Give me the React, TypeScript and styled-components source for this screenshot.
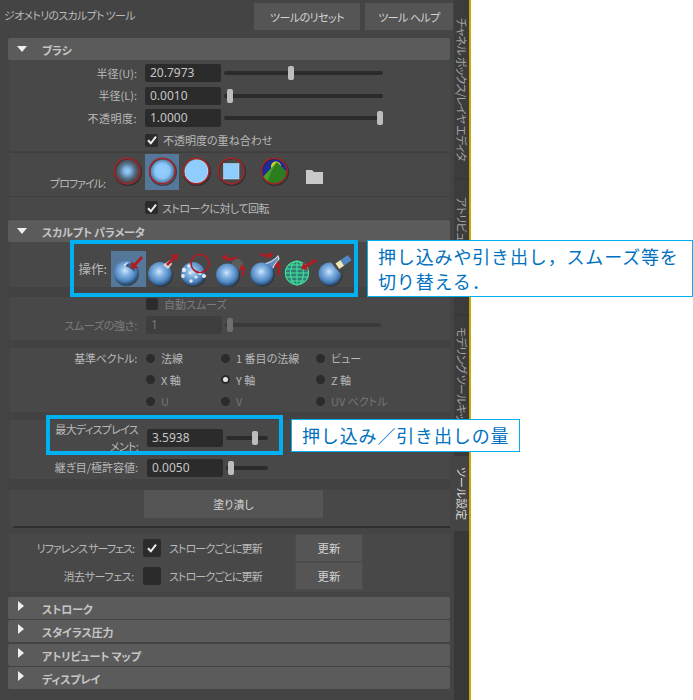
import React from "react";
import styled, { createGlobalStyle } from "styled-components";

const Global = createGlobalStyle`
  html, body { margin: 0; padding: 0; background: #fff; }
  body { width: 693px; height: 700px; overflow: hidden; }
`;

const jp = `"Noto Sans CJK JP", "Noto Sans", sans-serif`;

const Page = styled.div`
  position: relative;
  width: 693px;
  height: 700px;
  background: #fff;
  font-family: ${jp};
  font-size: 11px;
  color: #b9b9b9;
  font-feature-settings: "palt";
  overflow: hidden;
`;
const Window = styled.div`
  display: flex;
  width: 471px;
  height: 700px;
  box-sizing: border-box;
  background: #444;
  border-right: 2px solid #c9a80c;
`;
const Main = styled.div`
  width: 454px;
  flex: none;
  display: flex;
  flex-direction: column;
`;
const TabColumn = styled.div`
  width: 15px;
  flex: none;
  display: flex;
  flex-direction: column;
  background: #383838;
`;
const Tab = styled.div<{ $h: number; $active?: boolean; $pad: number }>`
  height: ${(p) => p.$h}px;
  box-sizing: border-box;
  padding-top: ${(p) => p.$pad}px;
  margin-bottom: 2px;
  background: ${(p) => (p.$active ? "#444" : "#3c3c3c")};
  color: ${(p) => (p.$active ? "#dcdcdc" : "#a4a4a4")};
  writing-mode: vertical-rl;
  text-orientation: sideways;
  line-height: 15px;
  font-size: 11px;
  letter-spacing: ${(p) => (p.$active ? "0" : "-0.7px")};
  white-space: nowrap;
  overflow: hidden;
`;
const Header = styled.div`
  height: 38px;
  box-sizing: border-box;
  padding: 3px 1px 0 4px;
  display: flex;
  gap: 5px;
`;
const Title = styled.div`
  flex: 1;
  line-height: 25px;
  font-size: 11px;
  letter-spacing: -0.7px;
`;
const PushButton = styled.div<{ $w: number; $h: number; $tight?: boolean }>`
  width: ${(p) => p.$w}px;
  height: ${(p) => p.$h}px;
  flex: none;
  box-sizing: border-box;
  background: #555;
  color: #d4d4d4;
  display: flex;
  align-items: center;
  justify-content: center;
  font-size: 11px;
  letter-spacing: ${(p) => (p.$tight ? "-0.55px" : "0")};
`;
const RefButton = styled(PushButton)`
  border: 1px solid #4c4c4c;
  font-size: 11.5px;
`;
const SectionHead = styled.div`
  width: 442px;
  height: 22px;
  padding-top: 2px;
  margin-left: 8px;
  box-sizing: border-box;
  flex: none;
  background: #5b5b5b;
  border-radius: 2px;
  display: flex;
  align-items: center;
  color: #c6c6c6;
  font-weight: 700;
  font-size: 11px;
  letter-spacing: -0.15px;
`;
const Arrow = styled.span<{ $open?: boolean }>`
  width: 34px;
  padding-left: 8px;
  box-sizing: border-box;
  flex: none;
  display: flex;
  &::before {
    content: "";
    ${(p) =>
      p.$open
        ? "border-left:5px solid transparent;border-right:5px solid transparent;border-top:6px solid #eee;margin:-2px 0 0 1px;"
        : "border-top:5px solid transparent;border-bottom:5px solid transparent;border-left:6px solid #eee;margin:-6px 0 0 2px;"}
  }
`;
const Body = styled.div<{ $pt: number }>`
  padding-top: ${(p) => p.$pt}px;
  width: 440px;
  margin-left: 10px;
  margin-right: 4px;
  background: #484848;
`;
const Row = styled.div<{ $h: number; $dim?: boolean }>`
  height: ${(p) => p.$h}px;
  margin-left: -10px;
  display: flex;
  align-items: center;
  color: ${(p) => (p.$dim ? "#7c7c7c" : "inherit")};
`;
const Label = styled.div<{ $w: number; $mr: number; $sp?: number }>`
  width: ${(p) => p.$w}px;
  margin-right: ${(p) => p.$mr}px;
  flex: none;
  text-align: right;
  line-height: 17px;
  letter-spacing: ${(p) => p.$sp ?? 0}px;
`;
const Field = styled.div<{ $dim?: boolean }>`
  width: 76px;
  height: 18px;
  flex: none;
  box-sizing: border-box;
  padding-left: 5px;
  background: ${(p) => (p.$dim ? "#3e3e3e" : "#2b2b2b")};
  color: ${(p) => (p.$dim ? "#777" : "#c6c6c6")};
  border-radius: 2px;
  font-family: "Noto Sans", sans-serif;
  font-size: 12px;
  line-height: 18px;
`;
const Track = styled.div<{ $w: number; $ml: number; $dim?: boolean }>`
  position: relative;
  width: ${(p) => p.$w}px;
  margin-left: ${(p) => p.$ml}px;
  height: 4px;
  flex: none;
  border-radius: 2px;
  background: ${(p) => (p.$dim ? "#3a3a3a" : "#2b2b2b")};
`;
const Thumb = styled.div<{ $x: number; $dim?: boolean }>`
  position: absolute;
  left: ${(p) => p.$x}px;
  top: -5px;
  width: 6px;
  height: 14px;
  border-radius: 2px;
  background: ${(p) => (p.$dim ? "#6e6e6e" : "#bdbdbd")};
`;
const CheckBox = styled.div<{ $size: number }>`
  width: ${(p) => p.$size}px;
  height: ${(p) => p.$size}px;
  flex: none;
  background: #2b2b2b;
  border-radius: 2px;
  display: flex;
  align-items: center;
  justify-content: center;
  color: #eee;
`;
const CheckText = styled.span<{ $ml: number; $sp?: number; $w?: number }>`
  margin-left: ${(p) => p.$ml}px;
  letter-spacing: ${(p) => p.$sp ?? 0}px;
  ${(p) => (p.$w ? `width: ${p.$w}px; flex: none;` : "")}
`;
const Rule = styled.div`
  height: 1px;
  background: #3e3e3e;
`;
const Gutter = styled.div<{ $h: number }>`
  height: ${(p) => p.$h}px;
  background: #424242;
  margin-left: -2px;
`;
const ProfileRow = styled.div`
  height: 43px;
  margin-left: -10px;
  padding-top: 1px;
  box-sizing: border-box;
  display: flex;
  align-items: flex-start;
`;
const ProfileLabel = styled.div`
  width: 105px;
  margin-right: 5px;
  padding-top: 21px;
  text-align: right;
  flex: none;
  letter-spacing: -1px;
`;
const IconCell = styled.div<{ $sel?: boolean; $ml?: number }>`
  width: 34.5px;
  height: 36px;
  flex: none;
  margin-left: ${(p) => p.$ml ?? 0}px;
  background: ${(p) => (p.$sel ? "#55789a" : "transparent")};
  svg { display: block; }
`;
const FolderCell = styled.div`
  margin: 15px 0 0 14px;
  svg { display: block; }
`;
const OpRow = styled.div`
  height: 36px;
  margin: 9px 0 0 -10px;
  display: flex;
  align-items: center;
`;
const OpLabel = styled.div`
  width: 107px;
  margin-right: 4px;
  text-align: right;
  flex: none;
  font-size: 12.5px;
`;
const RadioRow = styled.div`
  height: 21.5px;
  margin-left: -10px;
  display: flex;
  align-items: center;
`;
const VecLabel = styled.div`
  width: 137px;
  text-align: right;
  flex: none;
  letter-spacing: -0.3px;
`;
const RadioItem = styled.div<{ $w: number; $ml?: number; $dim?: boolean }>`
  width: ${(p) => p.$w}px;
  margin-left: ${(p) => p.$ml ?? 0}px;
  flex: none;
  display: flex;
  align-items: center;
  gap: 6px;
  color: ${(p) => (p.$dim ? "#767676" : "inherit")};
  white-space: nowrap;
`;
const Radio = styled.span<{ $on?: boolean }>`
  width: 9px;
  height: 9px;
  flex: none;
  box-sizing: border-box;
  border-radius: 50%;
  background: ${(p) => (p.$on ? "#e4e4e4" : "#2b2b2b")};
  border: ${(p) => (p.$on ? "2px solid #2b2b2b" : "none")};
`;
const FillRow = styled.div`
  height: 36px;
  margin-left: -10px;
  padding-left: 144px;
  box-sizing: border-box;
`;
const HeavyRule = styled.div`
  width: 437px;
  height: 2px;
  margin: 0 0 6px 13px;
  background: #2f2f2f;
`;
const RefBlock = styled.div`
  width: 440px;
  margin: 0 0 5px 10px;
  height: 58px;
  background: #484848;
`;
const RefRow = styled.div`
  height: 28px;
  margin-left: -10px;
  display: flex;
  align-items: center;
`;
const Stack = styled.div`
  display: flex;
  flex-direction: column;
  gap: 1.4px;
`;
const CalloutFrame = styled.div<{ $x: number; $y: number; $w: number; $h: number }>`
  position: absolute;
  left: ${(p) => p.$x}px;
  top: ${(p) => p.$y}px;
  width: ${(p) => p.$w}px;
  height: ${(p) => p.$h}px;
  box-sizing: border-box;
  border: 4px solid #00b0f0;
`;
const Note = styled.div<{ $x: number; $y: number; $w: number; $h: number; $pt: number }>`
  position: absolute;
  left: ${(p) => p.$x}px;
  top: ${(p) => p.$y}px;
  width: ${(p) => p.$w}px;
  height: ${(p) => p.$h}px;
  box-sizing: border-box;
  background: #fff;
  border: 1px solid #00b0f0;
  color: #0070c0;
  font-size: 18px;
  line-height: 25px;
  letter-spacing: 0.85px;
  font-feature-settings: normal;
  padding: ${(p) => p.$pt}px 0 0 10px;
  white-space: pre;
`;

const Check = () => (
  <svg width="10" height="10" viewBox="0 0 10 10">
    <path d="M1 5.3 L3.8 8.3 L9 1.6" fill="none" stroke="currentColor" strokeWidth="2" />
  </svg>
);

const Grad = ({ id }: { id: string }) => (
  <radialGradient id={id} cx="0.46" cy="0.4" r="0.62">
    <stop offset="0" stopColor="#cfe6fb" />
    <stop offset="0.3" stopColor="#8ab8e6" />
    <stop offset="0.7" stopColor="#4f86c0" />
    <stop offset="1" stopColor="#1f3f66" />
  </radialGradient>
);

const Ball = ({ id, cx, cy, r }: { id: string; cx: number; cy: number; r: number }) => (
  <>
    <defs>
      <Grad id={id} />
    </defs>
    <circle cx={cx + 0.8} cy={cy + 1} r={r + 0.3} fill="#2a2a2a" opacity="0.55" />
    <circle cx={cx} cy={cy} r={r} fill={`url(#${id})`} />
  </>
);

const RedArrow = ({ x1, y1, x2, y2 }: { x1: number; y1: number; x2: number; y2: number }) => {
  const a = Math.atan2(y2 - y1, x2 - x1);
  const l = 7.5;
  const p = (d: number) => `${x2 - l * Math.cos(a + d)},${y2 - l * Math.sin(a + d)}`;
  return (
    <>
      <line x1={x1} y1={y1} x2={x2 - 3 * Math.cos(a)} y2={y2 - 3 * Math.sin(a)} stroke="#b01c22" strokeWidth="2.8" />
      <polygon points={`${x2},${y2} ${p(0.66)} ${p(-0.66)}`} fill="#b01c22" />
    </>
  );
};

const Curl = ({ d }: { d: string }) => (
  <path d={d} fill="none" stroke="#b01c22" strokeWidth="2.2" />
);

const CurlHead = ({ points }: { points: string }) => <polygon points={points} fill="#b01c22" />;

const Svg = ({ children }: { children: React.ReactNode }) => (
  <svg width="34.5" height="36" viewBox="0 0 34.5 36">
    {children}
  </svg>
);

const Ring = () => (
  <>
    <circle cx="18" cy="18" r="13.3" fill="none" stroke="#222" strokeWidth="1.6" opacity="0.6" />
    <circle cx="17.25" cy="17" r="12.8" fill="none" stroke="#a72326" strokeWidth="1.5" />
  </>
);

const ProfileIcons = () => (
  <>
    <IconCell>
      <Svg>
        <defs>
          <radialGradient id="pf1">
            <stop offset="0" stopColor="#90ccff" />
            <stop offset="0.25" stopColor="#84bbe8" />
            <stop offset="0.65" stopColor="#566e84" />
            <stop offset="1" stopColor="#444" />
          </radialGradient>
        </defs>
        <circle cx="17.25" cy="17" r="12" fill="url(#pf1)" />
        <Ring />
      </Svg>
    </IconCell>
    <IconCell $sel>
      <Svg>
        <defs>
          <radialGradient id="pf2">
            <stop offset="0" stopColor="#93cfff" />
            <stop offset="0.6" stopColor="#8cc8fb" />
            <stop offset="1" stopColor="#4d7ca4" />
          </radialGradient>
        </defs>
        <circle cx="17.25" cy="17" r="12" fill="url(#pf2)" />
        <Ring />
      </Svg>
    </IconCell>
    <IconCell>
      <Svg>
        <circle cx="17.25" cy="17" r="12.2" fill="#90cdff" />
        <circle cx="17.25" cy="17" r="11.9" fill="none" stroke="#e8e8e8" strokeWidth="0.6" />
        <Ring />
      </Svg>
    </IconCell>
    <IconCell>
      <Svg>
        <Ring />
        <rect x="9.5" y="9.5" width="15.5" height="15.5" fill="#90cdff" stroke="#d5e6f2" strokeWidth="0.5" />
      </Svg>
    </IconCell>
    <IconCell $ml={9}>
      <Svg>
        <defs>
          <clipPath id="pf5">
            <circle cx="17.25" cy="17" r="12.5" />
          </clipPath>
        </defs>
        <g clipPath="url(#pf5)">
          <rect x="3" y="3" width="29" height="29" fill="#1c2c9a" />
          <circle cx="19" cy="12.5" r="5" fill="#d9d82a" />
          <polygon points="3,26 20,8 32,20 32,32 3,32" fill="#2c7d1e" />
          <polygon points="3,26 20,8 14,18 9,32 3,32" fill="#4aa02c" />
        </g>
        <Ring />
      </Svg>
    </IconCell>
    <FolderCell>
      <svg width="17" height="15" viewBox="0 0 17 15">
        <path d="M0 1 H6 L8 3 H17 V15 H0 Z" fill="#c9c9c9" />
      </svg>
    </FolderCell>
  </>
);

const OpIcons = () => (
  <>
    <IconCell $sel>
      <Svg>
        <Ball id="op1" cx={15} cy={22} r={12} />
        <path d="M13 15 Q19 10 25 13 L24 21 Q17 15 13 15 Z" fill="#3d5c80" />
        <path d="M12.5 14 Q15 11 18 11 Q15 13 14 16 Z" fill="#d4e4f4" />
        <RedArrow x1={31} y1={6} x2={20} y2={18} />
      </Svg>
    </IconCell>
    <IconCell>
      <Svg>
        <Ball id="op2" cx={14} cy={23} r={12} />
        <polygon points="17,14 24,9 26,13 22,18" fill="#d8d8d8" />
        <RedArrow x1={21} y1={14} x2={32} y2={3} />
      </Svg>
    </IconCell>
    <IconCell>
      <Svg>
        <Ball id="op3" cx={13} cy={23} r={12} />
        <g fill="#dfe9f4">
          <circle cx="4" cy="19" r="2.2" />
          <circle cx="9" cy="15" r="1.8" />
          <circle cx="3" cy="25" r="1.9" />
          <circle cx="10" cy="22" r="1.4" />
          <circle cx="16" cy="26" r="1.6" />
          <circle cx="20" cy="22" r="1.9" />
          <circle cx="24" cy="25" r="2.1" />
          <circle cx="11" cy="30" r="1.7" />
        </g>
        <circle cx="20" cy="12.5" r="9" fill="none" stroke="#b01c22" strokeWidth="1.6" />
      </Svg>
    </IconCell>
    <IconCell>
      <Svg>
        <circle cx="22.5" cy="14" r="6" fill="#5c5c5c" />
        <Ball id="op4" cx={12.5} cy={24} r={11.5} />
        <Curl d="M10 7 Q16 10 22 6" />
        <CurlHead points="6,6 13,3.5 12,10" />
        <Curl d="M27 16 Q30 21 27 25" />
        <CurlHead points="27,13 24,19 31,19" />
      </Svg>
    </IconCell>
    <IconCell>
      <Svg>
        <path d="M5 15 Q15 13 21 10 L28 6 L30 7 L24 16 Q24 20 24 24 L12 20 Z" fill="#5f8fc2" />
        <Ball id="op5" cx={13} cy={23} r={11.5} />
        <path d="M17 12.5 Q23 11.5 29 5 L30 8 Q25 14 24 17" fill="none" stroke="#e6e6e6" strokeWidth="1.1" />
        <Curl d="M11 3 Q17 6 22 4" />
        <CurlHead points="25,3 18,1.5 20,8" />
        <Curl d="M29 14 Q31 19 29 24" />
        <CurlHead points="29,9.5 25,16 32,16" />
      </Svg>
    </IconCell>
    <IconCell>
      <Svg>
        <circle cx="13" cy="22" r="12" fill="#2d7f78" />
        <g fill="none" stroke="#45e09a" strokeWidth="1.1">
          <circle cx="13" cy="22" r="11.6" />
          <ellipse cx="13" cy="22" rx="6.5" ry="12" />
          <line x1="13" y1="10" x2="13" y2="34" />
          <line x1="1.5" y1="18" x2="24.5" y2="18" />
          <line x1="1.5" y1="22" x2="25" y2="22" />
          <line x1="2" y1="26" x2="24" y2="26" />
          <line x1="4" y1="14" x2="22" y2="14" />
          <line x1="6" y1="30" x2="20" y2="30" />
        </g>
        <RedArrow x1={32} y1={9} x2={17} y2={18} />
      </Svg>
    </IconCell>
    <IconCell>
      <Svg>
        <Ball id="op7" cx={12} cy={23} r={11.5} />
        <path d="M13 11 Q23 13 24 24 Q17 17 13 11 Z" fill="#484848" />
        <g transform="rotate(-35 25 11)">
          <rect x="18" y="8" width="6" height="6.5" fill="#efe7b8" />
          <rect x="24" y="8" width="9" height="6.5" fill="#4f88c4" />
        </g>
      </Svg>
    </IconCell>
  </>
);

const Collapsed = ({ children }: { children: string }) => (
  <SectionHead>
    <Arrow />
    {children}
  </SectionHead>
);

export default function App() {
  return (
    <Page>
      <Global />
      <Window>
        <Main>
          <Header>
            <Title>ジオメトリのスカルプト ツール</Title>
            <PushButton $w={106} $h={27} $tight>ツールのリセット</PushButton>
            <PushButton $w={88} $h={27} $tight>ツール ヘルプ</PushButton>
          </Header>

          <SectionHead>
            <Arrow $open />
            ブラシ
          </SectionHead>
          <Body $pt={2}>
            <Row $h={22.5}>
              <Label $w={137} $mr={8}>半径(U):</Label>
              <Field>20.7973</Field>
              <Track $w={159} $ml={3}><Thumb $x={64} /></Track>
            </Row>
            <Row $h={22.5}>
              <Label $w={137} $mr={8}>半径(L):</Label>
              <Field>0.0010</Field>
              <Track $w={159} $ml={3}><Thumb $x={3} /></Track>
            </Row>
            <Row $h={22.5}>
              <Label $w={137} $mr={8} $sp={0.5}>不透明度:</Label>
              <Field>1.0000</Field>
              <Track $w={159} $ml={3}><Thumb $x={153} /></Track>
            </Row>
            <Row $h={21}>
              <Label $w={137} $mr={8} />
              <CheckBox $size={13}><Check /></CheckBox>
              <CheckText $ml={5}>不透明度の重ね合わせ</CheckText>
            </Row>
            <Gutter $h={1} />
            <Rule />
            <ProfileRow>
              <ProfileLabel>プロファイル:</ProfileLabel>
              <ProfileIcons />
            </ProfileRow>
            <Rule />
            <Row $h={22}>
              <Label $w={137} $mr={8} />
              <CheckBox $size={13}><Check /></CheckBox>
              <CheckText $ml={4} $sp={-0.5}>ストロークに対して回転</CheckText>
            </Row>
            <Gutter $h={1} />
          </Body>

          <SectionHead>
            <Arrow $open />
            スカルプト パラメータ
          </SectionHead>
          <Body $pt={0}>
            <OpRow>
              <OpLabel>操作:</OpLabel>
              <OpIcons />
            </OpRow>
            <Gutter $h={10} />
            <Row $h={14} $dim>
              <Label $w={137} $mr={9} />
              <CheckBox $size={12} />
              <CheckText $ml={6}>自動スムーズ</CheckText>
            </Row>
            <Row $h={29} $dim>
              <Label $w={137} $mr={9} $sp={-0.3}>スムーズの強さ:</Label>
              <Field $dim>1</Field>
              <Track $w={156} $ml={3} $dim><Thumb $x={2} $dim /></Track>
            </Row>
            <Gutter $h={8} />
            <RadioRow>
              <VecLabel>基準ベクトル:</VecLabel>
              <RadioItem $w={75} $ml={9}><Radio />法線</RadioItem>
              <RadioItem $w={95}><Radio />1 番目の法線</RadioItem>
              <RadioItem $w={70}><Radio />ビュー</RadioItem>
            </RadioRow>
            <RadioRow>
              <VecLabel />
              <RadioItem $w={75} $ml={9}><Radio />X 軸</RadioItem>
              <RadioItem $w={95}><Radio $on />Y 軸</RadioItem>
              <RadioItem $w={70}><Radio />Z 軸</RadioItem>
            </RadioRow>
            <RadioRow>
              <VecLabel />
              <RadioItem $w={75} $ml={9} $dim><Radio />U</RadioItem>
              <RadioItem $w={95} $dim><Radio />V</RadioItem>
              <RadioItem $w={70} $dim><Radio />UV ベクトル</RadioItem>
            </RadioRow>
            <Gutter $h={8} />
            <Row $h={36}>
              <Label $w={138} $mr={9} $sp={-0.7}>最大ディスプレイス<br />メント:</Label>
              <Field>3.5938</Field>
              <Track $w={42} $ml={3}><Thumb $x={26} /></Track>
            </Row>
            <Row $h={23}>
              <Label $w={138} $mr={9}>継ぎ目/極許容値:</Label>
              <Field>0.0050</Field>
              <Track $w={42} $ml={3}><Thumb $x={2} /></Track>
            </Row>
            <Gutter $h={11} />
            <FillRow>
              <PushButton $w={179} $h={28}>塗り潰し</PushButton>
            </FillRow>
          </Body>
          <HeavyRule />
          <RefBlock>
            <RefRow>
              <Label $w={134} $mr={9} $sp={-1}>リファレンス サーフェス:</Label>
              <CheckBox $size={18}><Check /></CheckBox>
              <CheckText $ml={8} $sp={-0.9} $w={126}>ストロークごとに更新</CheckText>
              <RefButton $w={68} $h={28}>更新</RefButton>
            </RefRow>
            <RefRow>
              <Label $w={134} $mr={9} $sp={-0.4}>消去サーフェス:</Label>
              <CheckBox $size={18} />
              <CheckText $ml={8} $sp={-0.9} $w={126}>ストロークごとに更新</CheckText>
              <RefButton $w={68} $h={28}>更新</RefButton>
            </RefRow>
          </RefBlock>
          <Stack>
            <Collapsed>ストローク</Collapsed>
            <Collapsed>スタイラス圧力</Collapsed>
            <Collapsed>アトリビュート マップ</Collapsed>
            <Collapsed>ディスプレイ</Collapsed>
          </Stack>
        </Main>
        <TabColumn>
          <Tab $h={178} $pad={18}>チャネル ボックス/レイヤ エディタ</Tab>
          <Tab $h={134} $pad={17}>アトリビュート エディタ</Tab>
          <Tab $h={138} $pad={11}>モデリング ツールキット</Tab>
          <Tab $h={75} $pad={11} $active>ツール設定</Tab>
        </TabColumn>
      </Window>

      <CalloutFrame $x={70} $y={240} $w={288} $h={57} />
      <Note $x={367} $y={240} $w={326} $h={57} $pt={3}>{"押し込みや引き出し，スムーズ等を\n切り替える．"}</Note>
      <CalloutFrame $x={46} $y={415} $w={237} $h={40} />
      <Note $x={291} $y={419} $w={229} $h={33} $pt={3}>押し込み／引き出しの量</Note>
    </Page>
  );
}
